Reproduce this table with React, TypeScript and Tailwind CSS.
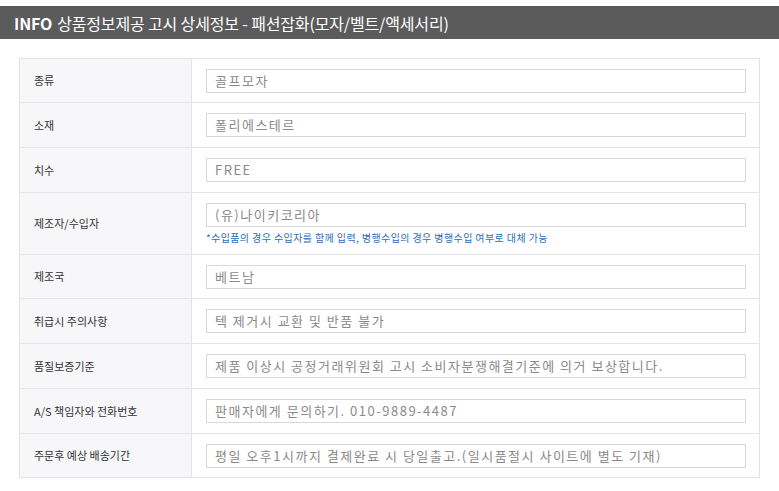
import React from "react";

const rows: { label: string; value: string; note?: string; h: string }[] = [
  { label: "종류", value: "골프모자", h: "h-[43px]" },
  { label: "소재", value: "폴리에스테르", h: "h-[45px]" },
  { label: "치수", value: "FREE", h: "h-[45px]" },
  {
    label: "제조자/수입자",
    value: "(유)나이키코리아",
    note: "*수입품의 경우 수입자를 함께 입력, 병행수입의 경우 병행수입 여부로 대체 가능",
    h: "h-[62px]",
  },
  { label: "제조국", value: "베트남", h: "h-[44px]" },
  { label: "취급시 주의사항", value: "텍 제거시 교환 및 반품 불가", h: "h-[45px]" },
  { label: "품질보증기준", value: "제품 이상시 공정거래위원회 고시 소비자분쟁해결기준에 의거 보상합니다.", h: "h-[45px]" },
  { label: "A/S 책임자와 전화번호", value: "판매자에게 문의하기. 010-9889-4487", h: "h-[45px]" },
  { label: "주문후 예상 배송기간", value: "평일 오후1시까지 결제완료 시 당일출고.(일시품절시 사이트에 별도 기재)", h: "h-[44px]" },
];

export default function App() {
  return (
    <div
      className="w-[779px] h-[491px] bg-white pt-[6px]"
      style={{ fontFamily: '"Noto Sans CJK KR", "Noto Sans", sans-serif' }}
    >
      <div className="h-[33px] bg-[#5b5b5b] flex items-center pl-[14px] text-white text-[16px] tracking-[-0.15px]">
        <span className="font-bold mr-[5px]">INFO</span>
        <span>상품정보제공 고시 상세정보 - 패션잡화(모자/벨트/액세서리)</span>
      </div>
      <div className="mt-[19px] ml-[19px] w-[741px] border border-[#e4e4e8]">
        {rows.map((r, i) => (
          <div
            key={i}
            className={`flex ${i > 0 ? "border-t border-[#e4e4ea]" : ""} ${r.h}`}
          >
            <div className="w-[172px] shrink-0 bg-[#f7f7fa] border-r border-[#e4e4ea] flex items-center pl-[14px] text-[11px] text-[#333] tracking-[0px]">
              {r.label}
            </div>
            <div className="flex-1 flex flex-col justify-center pl-[14px] pr-[13px]">
              <div className="h-[24px] border border-[#d8d8d8] flex items-center pl-[8px] text-[13px] text-[#8a8a8a] tracking-[1.5px]">
                {r.value}
              </div>
              {r.note && (
                <div className="mt-[4px] text-[10px] text-[#2a6fc0] tracking-[0.4px] leading-[14px]">
                  {r.note}
                </div>
              )}
            </div>
          </div>
        ))}
      </div>
    </div>
  );
}
